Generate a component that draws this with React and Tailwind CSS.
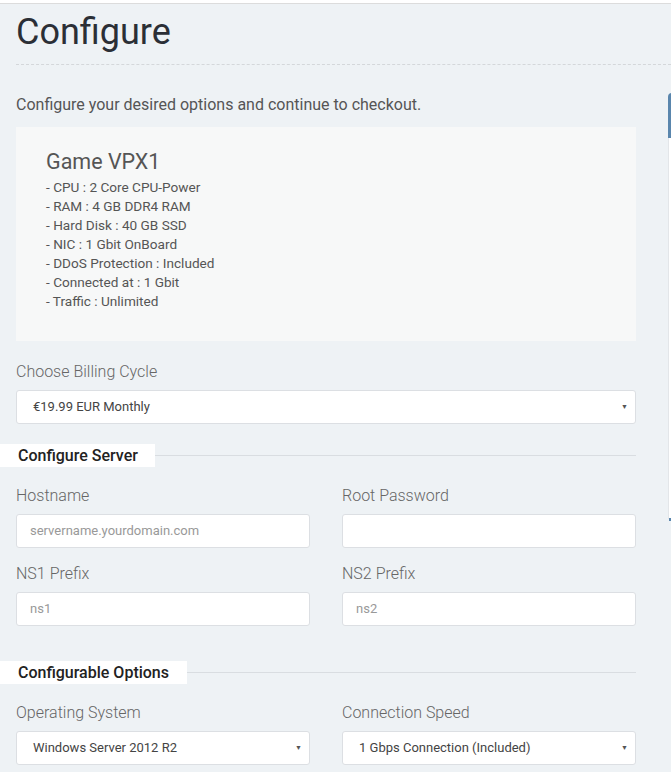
import React from 'react';

const specs = [
  '- CPU : 2 Core CPU-Power',
  '- RAM : 4 GB DDR4 RAM',
  '- Hard Disk : 40 GB SSD',
  '- NIC : 1 Gbit OnBoard',
  '- DDoS Protection : Included',
  '- Connected at : 1 Gbit',
  '- Traffic : Unlimited',
];

const Label = ({ children }) => (
  <div className="text-[16px] leading-[20px] font-light text-[#666] mb-2">{children}</div>
);

const Field = ({ placeholder }) => (
  <div className="h-[34px] bg-white border border-[#dcdfe3] rounded-[3px] px-[13px] flex items-center text-[13px] text-[#999]">
    {placeholder}
  </div>
);

const Select = ({ value }) => (
  <div className="h-[34px] bg-white border border-[#dcdfe3] rounded-[3px] pl-4 pr-[7px] flex items-center justify-between text-[13px] text-[#444]">
    <span>{value}</span>
    <span className="text-[7px] text-[#555]">▼</span>
  </div>
);

const Section = ({ title, width }) => (
  <div className="flex items-center -ml-4">
    <div className={`h-[23px] bg-white pl-[18px] flex items-center text-[16px] font-medium text-[#222] ${width}`}>{title}</div>
    <div className="flex-1 border-t border-[#d9dde1]" />
  </div>
);

export default function App() {
  return (
    <div className="w-[671px] h-[772px] overflow-hidden bg-[#eef2f5] font-['Roboto',sans-serif]">
      <div className="h-[4px] bg-white border-b border-[#dcdcdc]" />
      <div className="pl-4">
        <h1 className="text-[36px] leading-[44px] pt-[6px] text-[#2b2f36]">Configure</h1>
        <div className="mt-[10px] border-t border-dashed border-[#d4d7da]" />
      </div>

      <div className="flex gap-4">
        <main className="w-[652px] shrink-0 px-4">
          <p className="mt-[29px] text-[16px] leading-[21px] text-[#555]">
            Configure your desired options and continue to checkout.
          </p>

          <div className="mt-[12px] h-[214px] bg-[#f7f8f8] pl-[30px] pt-[23px]">
            <div className="text-[21.5px] leading-[24px] text-[#555]">Game VPX1</div>
            <div className="mt-[4px] text-[13.6px] leading-[19px] text-[#555]">
              {specs.map((s) => (
                <div key={s}>{s}</div>
              ))}
            </div>
          </div>

          <div className="mt-[21px]">
            <Label>Choose Billing Cycle</Label>
            <Select value="€19.99 EUR Monthly" />
          </div>

          <div className="mt-[20px]">
            <Section title="Configure Server" width="w-[155px]" />
          </div>

          <div className="mt-[19px] grid grid-cols-2 gap-x-8">
            <div>
              <Label>Hostname</Label>
              <Field placeholder="servername.yourdomain.com" />
            </div>
            <div>
              <Label>Root Password</Label>
              <Field placeholder="" />
            </div>
            <div className="mt-4">
              <Label>NS1 Prefix</Label>
              <Field placeholder="ns1" />
            </div>
            <div className="mt-4">
              <Label>NS2 Prefix</Label>
              <Field placeholder="ns2" />
            </div>
          </div>

          <div className="mt-[35px]">
            <Section title="Configurable Options" width="w-[187px]" />
          </div>

          <div className="mt-[19px] grid grid-cols-2 gap-x-8">
            <div>
              <Label>Operating System</Label>
              <Select value="Windows Server 2012 R2" />
            </div>
            <div>
              <Label>Connection Speed</Label>
              <Select value="1 Gbps Connection (Included)" />
            </div>
          </div>
        </main>

        <aside className="w-[300px] shrink-0 mt-[28px]">
          <div className="h-[45px] bg-[#5a86ad] rounded-tl-[4px]" />
          <div className="h-[381px] bg-white border-l border-[#e3e6e9] relative">
            <div className="absolute left-0 top-[380px] w-[3px] h-[3px] bg-[#5a86ad]" />
          </div>
        </aside>
      </div>
    </div>
  );
}
